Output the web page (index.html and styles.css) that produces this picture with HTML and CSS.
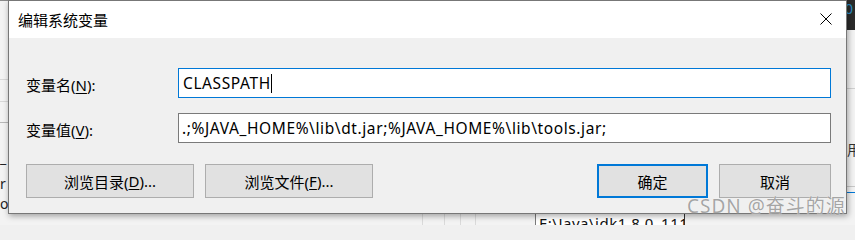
FILE: index.html
```html
<!DOCTYPE html>
<html lang="zh-CN">
<head>
<meta charset="utf-8">
<title>编辑系统变量</title>
<link rel="stylesheet" href="styles.css">
</head>
<body>
<div class="desktop">
  <div class="bg-left">
    <div class="bl-line l1"></div>
    <div class="bl-line l2"></div>
    <div class="bl-line l3"></div>
    <span class="bl-txt t1">_</span>
    <span class="bl-txt t2">r</span>
    <span class="bl-txt t3">o</span>
  </div>
  <div class="bg-right">
    <div class="br-dark"><span class="br-glyph">0</span></div>
    <div class="br-line r1"></div>
    <div class="br-line r2"></div>
    <span class="br-char">用</span>
    <div class="br-blue"></div>
  </div>
  <div class="bg-bottom">
    <div class="vline v1"></div>
    <div class="vline v2"></div>
    <div class="vline v3"></div>
    <div class="vline v4"></div>
    <div class="path-box">E:\Java\jdk1.8.0_111</div>
  </div>

  <div class="dialog">
    <div class="titlebar">
      <span class="title">编辑系统变量</span>
      <svg class="close" width="12" height="12" viewBox="0 0 12 12"><path d="M0.5 0.5 L11.5 11.5 M11.5 0.5 L0.5 11.5" stroke="#000" stroke-width="1" fill="none"/></svg>
    </div>
    <div class="body">
      <div class="fields">
        <label class="label">变量名(<u>N</u>):</label>
        <div class="input focused">CLASSPATH<span class="caret"></span></div>
        <label class="label">变量值(<u>V</u>):</label>
        <div class="input">.;%JAVA_HOME%\lib\dt.jar;%JAVA_HOME%\lib\tools.jar;</div>
      </div>
      <div class="buttons">
        <div class="btn wide">浏览目录(<u>D</u>)...</div>
        <div class="btn wide">浏览文件(<u>F</u>)...</div>
        <div class="spacer"></div>
        <div class="btn ok">确定</div>
        <div class="btn cancel">取消</div>
      </div>
    </div>
  </div>

  <div class="watermark">CSDN @奋斗的源</div>
</div>
</body>
</html>
```
FILE: styles.css
```css
html, body {
  margin: 0;
  padding: 0;
}
body {
  width: 855px;
  height: 225px;
  overflow: hidden;
  background: #f0f0f0;
  font-family: "Noto Sans", "Noto Sans CJK SC", sans-serif;
}
.desktop {
  position: relative;
  width: 855px;
  height: 225px;
  overflow: hidden;
  background: #f0f0f0;
}

/* background windows */
.bg-left {
  position: absolute;
  left: 0;
  top: 0;
  width: 8px;
  height: 225px;
  background: #f3f3f3;
  border-top: 1px solid #8a8a8a;
}
.bl-line {
  position: absolute;
  left: 0;
  width: 8px;
  height: 1px;
  background: #d8d8d8;
}
.l1 { top: 78px; }
.l2 { top: 100px; }
.l3 { top: 121px; background: #b8b8b8; }
.bl-txt {
  position: absolute;
  left: 0;
  font-family: "Noto Sans", sans-serif;
  font-size: 14px;
  line-height: 14px;
  color: #222;
}
.t1 { top: 150px; }
.t2 { top: 176px; }
.t3 { top: 196px; }

.bg-right {
  position: absolute;
  left: 847px;
  top: 0;
  width: 8px;
  height: 225px;
  background: #f3f3f3;
}
.br-dark {
  height: 30px;
  background: #2b2b2b;
  overflow: hidden;
}
.br-glyph {
  display: block;
  color: #2a8fc7;
  font-size: 14px;
  line-height: 14px;
  margin-left: -2px;
  margin-top: 2px;
}
.br-line {
  position: absolute;
  left: 0;
  width: 8px;
  height: 1px;
  background: #d0d0d0;
}
.r1 { top: 88px; }
.r2 { top: 186px; background: #c8c8c8; }
.br-char {
  position: absolute;
  left: 0;
  top: 141px;
  font-family: "Noto Sans CJK SC", sans-serif;
  font-size: 14px;
  line-height: 16px;
  color: #333;
}
.br-blue {
  position: absolute;
  left: 0;
  top: 192px;
  width: 8px;
  height: 1px;
  background: #0078d7;
}

.bg-bottom {
  position: absolute;
  left: 0;
  top: 213px;
  width: 855px;
  height: 12px;
  background: #f3f3f3;
}
.vline {
  position: absolute;
  top: 0;
  width: 1px;
  height: 12px;
  background: #dadada;
}
.v1 { left: 422px; }
.v2 { left: 444px; }
.v3 { left: 460px; }
.v4 { left: 475px; }
.path-box {
  position: absolute;
  left: 535px;
  top: 0;
  width: 150px;
  height: 20px;
  background: #fff;
  border-left: 1px solid #7a7a7a;
  border-right: 1px solid #333;
  font-family: "Noto Sans", sans-serif;
  font-size: 15px;
  letter-spacing: 0.5px;
  line-height: 20px;
  padding-left: 3px;
  color: #111;
  box-sizing: border-box;
  white-space: nowrap;
  overflow: hidden;
}

/* dialog */
.dialog {
  position: absolute;
  left: 8px;
  top: 0;
  width: 839px;
  height: 214px;
  box-sizing: border-box;
  border: 1px solid #777;
  background: #f0f0f0;
  box-shadow: 1px 2px 6px rgba(0, 0, 0, 0.35);
  display: flex;
  flex-direction: column;
}
.titlebar {
  height: 37px;
  background: #fff;
  display: flex;
  align-items: center;
  justify-content: space-between;
  padding: 0 14px 0 9px;
  flex: none;
}
.title {
  font-family: "Noto Sans CJK SC", sans-serif;
  font-size: 15px;
  color: #000;
  margin-top: -1px;
}
.close {
  display: block;
  margin-top: -1px;
}
.body {
  flex: 1;
  padding: 30px 15px 0 17px;
  display: flex;
  flex-direction: column;
}
.fields {
  display: grid;
  grid-template-columns: 152px 1fr;
  row-gap: 15px;
  align-items: center;
}
.label {
  font-family: "Noto Sans", "Noto Sans CJK SC", sans-serif;
  font-size: 15px;
  color: #000;
  padding-top: 3px;
}
.input {
  height: 30px;
  box-sizing: border-box;
  border: 1px solid #7a7a7a;
  background: #fff;
  font-family: "Noto Sans", sans-serif;
  font-size: 15.5px;
  letter-spacing: 0.6px;
  line-height: 28px;
  padding-left: 3px;
  color: #000;
  white-space: nowrap;
  overflow: hidden;
  display: flex;
  align-items: center;
}
.input.focused {
  border-color: #0078d7;
  padding-left: 4px;
}
.caret {
  display: inline-block;
  width: 1px;
  height: 19px;
  background: #000;
  margin-left: 0;
}
.buttons {
  display: flex;
  margin-top: 21px;
  gap: 11px;
}
.spacer {
  flex: 1;
}
.btn {
  height: 34px;
  box-sizing: border-box;
  border: 1px solid #adadad;
  background: #e1e1e1;
  display: flex;
  align-items: center;
  justify-content: center;
  font-family: "Noto Sans", "Noto Sans CJK SC", sans-serif;
  font-size: 15px;
  color: #000;
}
.btn.wide {
  width: 168px;
}
.btn.ok {
  width: 111px;
  border: 2px solid #0078d7;
}
.btn.cancel {
  width: 112px;
}
u {
  text-decoration-thickness: 1px;
  text-underline-offset: 2px;
}

.watermark {
  position: absolute;
  left: 687px;
  top: 194px;
  font-family: "Noto Sans", "Noto Sans CJK SC", sans-serif;
  font-size: 19px;
  letter-spacing: 1px;
  line-height: 24px;
  color: rgba(150, 150, 150, 0.85);
  text-shadow: 0 0 1px rgba(255, 255, 255, 0.9);
  white-space: nowrap;
}
```
